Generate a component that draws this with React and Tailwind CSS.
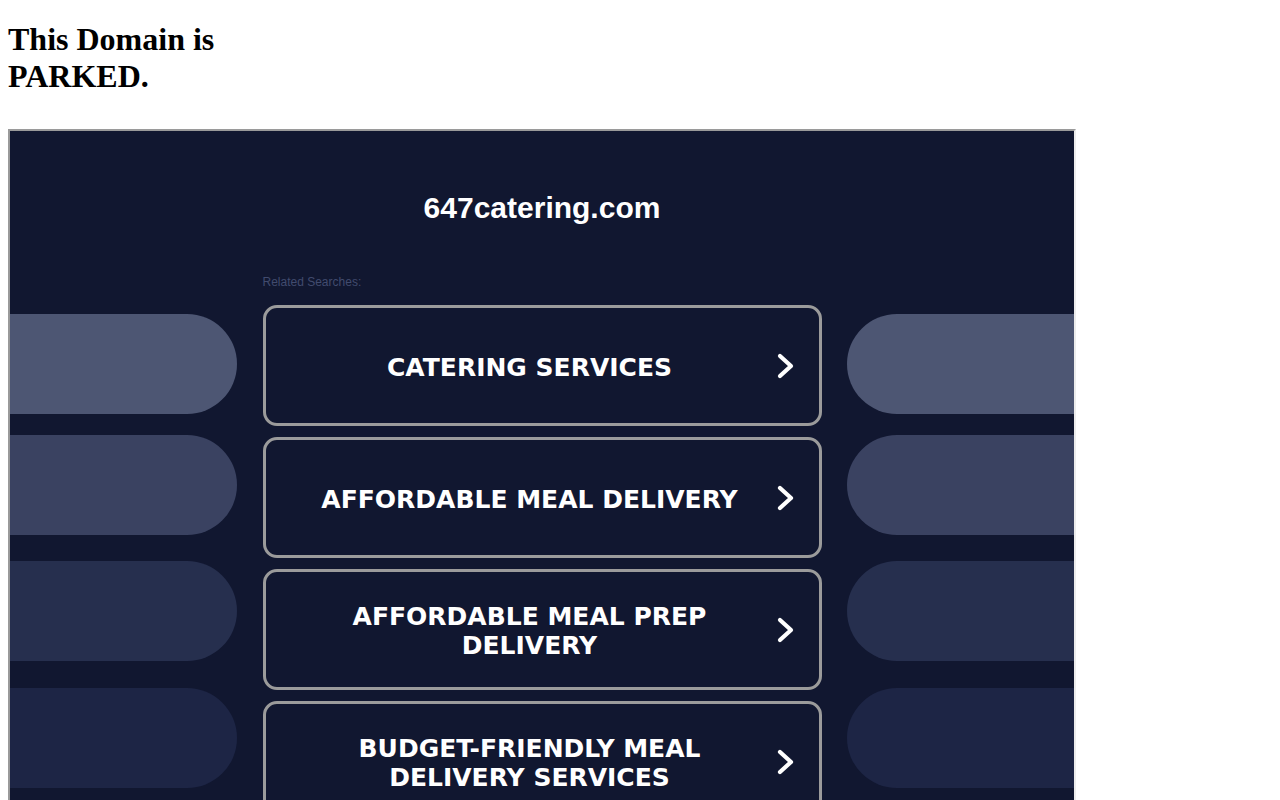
import React from "react";

const searches = [
  "Catering Services",
  "Affordable Meal Delivery",
  "Affordable Meal Prep Delivery",
  "Budget-Friendly Meal Delivery Services",
];

// decorative side pills: colour + top margin (px) so they line up like the reference
const pills = [
  { bg: "bg-[#4d5673]", mt: "mt-[183px]" },
  { bg: "bg-[#3a4261]", mt: "mt-[21px]" },
  { bg: "bg-[#262f4e]", mt: "mt-[26px]" },
  { bg: "bg-[#1d2545]", mt: "mt-[27px]" },
];

function Chevron() {
  return (
    <svg width="18" height="28" viewBox="0 0 18 28" className="shrink-0">
      <path
        d="M3 4 L14 14 L3 24"
        fill="none"
        stroke="white"
        strokeWidth="4.2"
        strokeLinecap="round"
        strokeLinejoin="round"
      />
    </svg>
  );
}

function SearchButton({ label }) {
  return (
    <a
      href="#"
      className="flex items-center h-[121px] rounded-[14px] border-[3px] border-[#9b9b9b] bg-[#111730] pl-[44px] pr-[24px]"
    >
      <span
        className="w-[440px] text-center text-white font-bold uppercase text-[25px] leading-[29px] pt-[3px]"
        style={{ fontFamily: '"DejaVu Sans", Verdana, sans-serif' }}
      >
        {label}
      </span>
      <span className="ml-[27px] flex">
        <Chevron />
      </span>
    </a>
  );
}

function SidePills({ side }) {
  return (
    <div className="flex flex-col w-[227px]">
      {pills.map((p, i) => (
        <div
          key={i}
          className={[
            "h-[100px]",
            p.bg,
            p.mt,
            side === "left" ? "rounded-r-full" : "rounded-l-full",
          ].join(" ")}
        />
      ))}
    </div>
  );
}

export default function App() {
  return (
    <div className="bg-white min-h-screen px-2 pt-[21px]">
      <h1
        className="w-[250px] text-[32px] leading-[37px] font-bold text-black"
        style={{ fontFamily: '"Liberation Serif", "Times New Roman", serif' }}
      >
        This Domain is PARKED.
      </h1>

      {/* framed parking page */}
      <div className="mt-[34px] w-[1068px] h-[720px] border-2 border-t-[#9a9a9a] border-l-[#9a9a9a] border-r-[#ececec] border-b-[#ececec] bg-[#111730] overflow-hidden">
        <div
          className="flex flex-col items-center pt-[60px]"
          style={{ fontFamily: '"Liberation Sans", Arial, sans-serif' }}
        >
          <div className="text-white font-bold text-[30px] leading-[34px]">
            647catering.com
          </div>
        </div>

        <div className="flex justify-between -mt-[94px]">
          <SidePills side="left" />

          <div className="w-[559px] flex flex-col pt-[144px]">
            <div
              className="text-[12px] leading-[14px] text-[#414b6e] mb-[16px]"
              style={{ fontFamily: '"Liberation Sans", Arial, sans-serif' }}
            >
              Related Searches:
            </div>
            <div className="flex flex-col gap-[11px]">
              {searches.map((s) => (
                <SearchButton key={s} label={s} />
              ))}
            </div>
          </div>

          <SidePills side="right" />
        </div>
      </div>
    </div>
  );
}
